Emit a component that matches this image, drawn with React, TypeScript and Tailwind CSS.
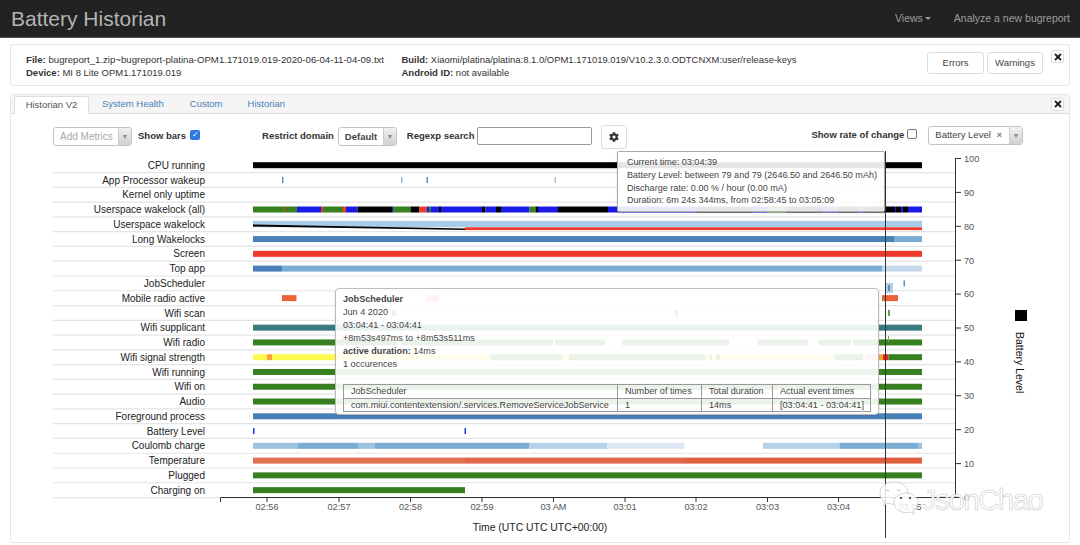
import { X } from 'lucide-react';
import { FaCog } from 'react-icons/fa';

const GREEN = '#37801f';
const BLUE = '#4a80b8';
const MID = '#79add4';
const PALE = '#a9cde8';
const RED = '#f0392b';
const ORANGE = '#ec6036';
const W = '#1a1ae6';
const K = '#000000';

type Seg = [number, number, string];

const blocks: Seg[] = [
  [253, 284, GREEN], [284, 285, RED], [285, 297, GREEN], [297, 321, W], [321, 323, RED], [323, 343, GREEN], [343, 346, RED],
  [346, 357.5, W], [357.5, 392, K], [392, 393, W], [393, 410.5, GREEN], [410.5, 419.5, K], [419.5, 426.5, RED], [426.5, 429, W],
  [429, 431, GREEN], [431, 439, W], [439, 441, K], [441, 482, W], [482, 485.5, K], [485.5, 496, W], [496, 501, K], [501, 529.5, W],
  [529.5, 535.5, GREEN], [535.5, 538, K], [538, 558, W], [558, 608, K], [608, 680, W], [680, 697, W], [697, 752, K], [752, 767, W],
  [767, 786, GREEN], [786, 822, K], [822, 838, W], [838, 858, K], [858, 865, W], [865, 895, K], [895, 896, W], [896, 901, K],
  [901, 903, W], [903, 908, K], [908, 914, W], [914, 922, W],
];

const radio: Seg[] = [
  [253, 397, GREEN], [401.5, 553, GREEN], [555, 605, GREEN], [622, 729, GREEN], [757.5, 808.5, GREEN], [818.5, 851, GREEN], [853, 922, GREEN],
];

const signal: Seg[] = [
  [253, 267, '#fdf94f'], [267, 272, '#f9a03a'], [272, 490, '#fdf94f'], [490, 562, GREEN], [562, 569, '#fdf94f'], [569, 705, GREEN],
  [705, 709.5, '#fdf94f'], [709.5, 712, GREEN], [712, 716, '#fdf94f'], [716, 720, GREEN], [720, 827.5, '#fdf94f'], [827.5, 834, '#fbe36a'],
  [834, 863, GREEN], [865, 879, '#f7a9a2'], [879, 883, '#f9a03a'], [883, 888.5, '#e8231c'], [888.5, 922, GREEN],
];

const coulomb: Seg[] = [
  [253, 298, '#9bc2de'], [298, 358, MID], [358, 375, '#9bc2de'], [375, 529.5, MID], [529.5, 607, '#b5d2ea'], [607, 684.5, '#dbe8f3'],
  [763, 839.5, '#b5d2ea'], [839.5, 918, MID], [918, 922, '#9bc2de'],
];

const rows: { label: string; segs: Seg[] }[] = [
  { label: 'CPU running', segs: [[253, 922, K]] },
  { label: 'App Processor wakeup', segs: [[282, 283.5, '#5b8fc6'], [401, 402.5, '#8fb8dc'], [426.5, 428, '#5b8fc6'], [554.5, 556, '#a9c4dc']] },
  { label: 'Kernel only uptime', segs: [] },
  { label: 'Userspace wakelock (all)', segs: blocks },
  { label: 'Userspace wakelock', segs: [] },
  { label: 'Long Wakelocks', segs: [[253, 894, BLUE], [894, 922, MID]] },
  { label: 'Screen', segs: [[253, 922, RED]] },
  { label: 'Top app', segs: [[253, 282, BLUE], [282, 882, MID], [882, 922, '#c6d9ec']] },
  { label: 'JobScheduler', segs: [[903.5, 905, '#5b8fc6']] },
  { label: 'Mobile radio active', segs: [[282, 296.5, ORANGE], [426.5, 439, '#ee7a5a'], [882, 898, ORANGE]] },
  { label: 'Wifi scan', segs: [[392, 395.5, GREEN], [675, 678, GREEN], [888, 890, '#5f9e50']] },
  { label: 'Wifi supplicant', segs: [[253, 922, '#3a7b80']] },
  { label: 'Wifi radio', segs: radio },
  { label: 'Wifi signal strength', segs: signal },
  { label: 'Wifi running', segs: [[253, 922, GREEN]] },
  { label: 'Wifi on', segs: [[253, 922, GREEN]] },
  { label: 'Audio', segs: [[253, 922, GREEN]] },
  { label: 'Foreground process', segs: [[253, 922, BLUE]] },
  { label: 'Battery Level', segs: [[253, 254.5, '#1a3ee6'], [464.5, 466, '#1a3ee6']] },
  { label: 'Coulomb charge', segs: coulomb },
  { label: 'Temperature', segs: [[253, 465, '#e2704e'], [465, 685, '#e2664a'], [685, 922, '#e05f3f']] },
  { label: 'Plugged', segs: [[253, 922, GREEN]] },
  { label: 'Charging on', segs: [[253, 465, GREEN]] },
];

const xTicks = [
  [267, '02:56'], [339, '02:57'], [410.5, '02:58'], [482, '02:59'], [553.5, '03 AM'], [625, '03:01'], [696, '03:02'], [767.5, '03:03'], [838.5, '03:04'], [910, '03:05'],
] as const;

const yTicks = [100, 90, 80, 70, 60, 50, 40, 30, 20, 10, 0];

const rowY = (i: number) => 165.2 + i * 14.77;

function Chart() {
  return (
    <svg viewBox="11 150 1058 392" className="block h-[392px] w-[1058px]" fontFamily="'Liberation Sans', sans-serif">
      {rows.map((row, i) => (
        <g key={row.label}>
          <text x={205} y={rowY(i) + 3.6} textAnchor="end" fontSize={10} fill="#222">{row.label}</text>
          <line x1={53} x2={955} y1={rowY(i) + 7.4} y2={rowY(i) + 7.4} stroke="#e4e4e4" strokeWidth={1.2} />
          {row.segs.map(([a, b, c]) => (
            <rect key={a} x={a} y={rowY(i) - 3} width={b - a} height={6} fill={c} />
          ))}
        </g>
      ))}

      {/* Userspace wakelock has a stacked bar with a wedge */}
      <rect x={253} y={220.8} width={669} height={6.5} fill={PALE} />
      <rect x={465} y={227.3} width={457} height={2.8} fill={RED} />
      <polygon points="253,224.4 253,226.6 465,230 465,228.4" fill="#000" />

      {/* JobScheduler highlight */}
      <rect x={886} y={283} width={7} height={10} fill="#b4cfe8" />
      <rect x={888} y={285} width={2} height={6} fill="#5b8fc6" />
      <rect x={888} y={336} width={1} height={6} fill="#9a9a3a" />

      <line x1={220.5} x2={955.5} y1={497.5} y2={497.5} stroke="#333" />
      <line x1={220.5} x2={220.5} y1={497.5} y2={502} stroke="#333" />
      {xTicks.map(([x, t]) => (
        <g key={t}>
          <line x1={x} x2={x} y1={497.5} y2={502} stroke="#333" />
          <text x={x} y={510} textAnchor="middle" fontSize={9.2} fill="#555">{t}</text>
        </g>
      ))}
      <text x={540} y={530.500} textAnchor="middle" fontSize={10.4} fill="#222">Time (UTC UTC UTC+00:00)</text>

      <line x1={955.5} x2={955.5} y1={158} y2={497.5} stroke="#333" />
      {yTicks.map((v, i) => (
        <g key={v}>
          <line x1={955.5} x2={961} y1={158.5 + i * 33.9} y2={158.5 + i * 33.9} stroke="#333" />
          <text x={964} y={161.8 + i * 33.9} fontSize={9.2} fill="#555">{v}</text>
        </g>
      ))}

      <rect x={1015} y={310} width={12} height={11} fill="#000" />
      <text transform="translate(1016 332) rotate(90)" fontSize={10.5} fill="#111">Battery Level</text>

      <line x1={885.5} x2={885.5} y1={151} y2={538} stroke="#333" />

      {/* watermark */}
      <g fill="#fff" fillOpacity={0.85} stroke="#c8c8c8" strokeWidth={0.8}>
        <path d="M894 482c-8.500 0-14 5-14 11.500 0 3.500 1.800 6.300 4.800 8.400l-1.200 3.600 4.300-2.200c2.100.6 4.100.9 6.100.9 6.500 0 13-4 14-10.700.3-6.700-5.500-11.500-14-11.500z" />
        <path d="M906 493c-6.800 0-12 4.300-12 9.800s5.200 9.800 12 9.800c1.600 0 3-.2 4.400-.7l3.800 2-1-3.300c2.800-1.900 4.800-4.600 4.800-7.800 0-5.500-5.200-9.800-12-9.800z" />
      </g>
      <path d="M886 491q1.500-2 3 0M897 491q1.500-2 3 0" fill="none" stroke="#aaa" strokeWidth={0.8} />
      <circle cx={901} cy={498} r={1.1} fill="#333" />
      <circle cx={910} cy={498} r={1.1} fill="#333" />
      <text x={922} y={510} fontSize={29} fill="#fff" fillOpacity={0.85} stroke="#cacaca" strokeWidth={0.6} textLength={122} fontFamily="'Liberation Sans', sans-serif">JsonChao</text>
    </svg>
  );
}

function Caret() {
  return <span className="h-0 w-0 border-x-[2.500px] border-t-[4px] border-x-transparent border-t-[#888]" />;
}

function SelectBox({ text, width, bold, muted }: { text: string; width: string; bold?: boolean; muted?: boolean }) {
  return (
    <div className={`flex h-[19px] shrink-0 items-stretch overflow-hidden rounded-[3px] border border-[#c4c4c4] ${width}`}>
      <span className={`flex-1 pl-[6px] leading-[18px] ${bold ? 'font-bold text-[#333]' : ''} ${muted ? 'text-[10px] text-[#aaa]' : 'text-[#444]'}`}>{text}</span>
      <span className="flex w-[13px] items-center justify-center border-l border-[#ccc] bg-linear-to-b from-[#f2f2f2] to-[#cfcfcf]">
        <Caret />
      </span>
    </div>
  );
}

function CloseBtn() {
  return (
    <span className="flex h-[13px] w-[13px] items-center justify-center rounded-[2px] border border-[#ddd] bg-white">
      <X size={10} strokeWidth={4.5} color="#222" />
    </span>
  );
}

export default function App() {
  return (
    <div className="h-[545px] w-[1080px] overflow-hidden bg-white font-['Liberation_Sans',sans-serif] text-[9.500px] text-[#333]">
      <nav className="flex h-[38px] items-center justify-between border-b border-[#555] bg-[#222] pl-[11px] pr-[10px]">
        <span className="text-[21px] text-[#b4b4b4]">Battery Historian</span>
        <div className="flex items-center gap-[23px] text-[10.500px] text-[#9d9d9d]">
          <span className="flex items-center gap-[2px]">
            Views
            <span className="h-0 w-0 border-x-[3px] border-t-[3px] border-x-transparent border-t-[#9d9d9d]" />
          </span>
          <span>Analyze a new bugreport</span>
        </div>
      </nav>

      <section className="mx-[10px] mt-[6px] flex h-[42px] rounded-[3px] border border-[#e6e6e6] pl-[15px] pr-[5px]">
        <div className="w-[375.500px] pt-[8px] leading-[13px]">
          <div className="text-[9.650px]"><b>File:</b> bugreport_1.zip~bugreport-platina-OPM1.171019.019-2020-06-04-11-04-09.txt</div>
          <div><b>Device:</b> MI 8 Lite OPM1.171019.019</div>
        </div>
        <div className="flex-1 pt-[8px] leading-[13px]">
          <div className="text-[9.450px]"><b>Build:</b> Xiaomi/platina/platina:8.1.0/OPM1.171019.019/V10.2.3.0.ODTCNXM:user/release-keys</div>
          <div><b>Android ID:</b> not available</div>
        </div>
        <div className="mt-[7px] flex h-[22px] gap-[3px]">
          <button className="w-[57px] rounded-[3px] border border-[#ddd] text-[#444]">Errors</button>
          <button className="w-[56px] rounded-[3px] border border-[#ddd] text-[#444]">Warnings</button>
        </div>
        <div className="ml-[8px] mt-[5px]"><CloseBtn /></div>
      </section>

      <section className="mx-[10px] mt-[8px] h-[449px] rounded-[3px] border border-[#e6e6e6]">
        <div className="flex h-[19px] items-end border-b border-[#ddd] bg-[#f5f5f5] pl-[3px] pr-[5px]">
          <span className="-mb-px flex h-[18px] w-[75px] items-center justify-center rounded-t-[3px] border border-b-0 border-[#ddd] bg-white text-[#555]">Historian V2</span>
          <span className="ml-[13px] flex h-[18px] items-center text-[#4a7fb5]">System Health</span>
          <span className="ml-[26px] flex h-[18px] items-center text-[#4a7fb5]">Custom</span>
          <span className="ml-[25px] flex h-[18px] items-center text-[#4a7fb5]">Historian</span>
          <span className="ml-auto self-center"><CloseBtn /></span>
        </div>

        <div className="flex h-[36px] items-center pt-[9px] pl-[42px]">
          <SelectBox text="Add Metrics" width="w-[79px]" muted />
          <b className="ml-[6px]">Show bars</b>
          <span className="-mt-[3px] ml-[4px] flex h-[10px] w-[10px] items-center justify-center rounded-[2px] bg-[#2f78e8] text-[8px] leading-none text-white">✓</span>
          <b className="ml-[62px]">Restrict domain</b>
          <span className="ml-[4px]"><SelectBox text="Default" width="w-[59px]" bold /></span>
          <b className="ml-[10px]">Regexp search</b>
          <span className="-mt-[1px] ml-[3px] h-[18px] w-[115px] rounded-[2px] border border-[#999] bg-white" />
          <span className="ml-[9px] flex h-[24px] w-[26px] items-center justify-center rounded-[3px] border border-[#ddd]">
            <FaCog size={10} color="#333" />
          </span>
          <b className="-mt-[2px] ml-[184px]">Show rate of change</b>
          <span className="-mt-[6px] ml-[3px] h-[10px] w-[10px] rounded-[2px] border border-[#777] bg-white" />
          <span className="-mt-[2px] ml-[11px] flex h-[19px] w-[95px] items-stretch overflow-hidden rounded-[3px] border border-[#c4c4c4] text-[#444]">
            <span className="flex flex-1 items-center gap-[6px] pl-[6px]">Battery Level <span className="text-[9px] font-bold text-[#777]">×</span></span>
            <span className="flex w-[13px] items-center justify-center border-l border-[#ccc] bg-linear-to-b from-[#f2f2f2] to-[#cfcfcf]"><Caret /></span>
          </span>
        </div>

        <div className="relative">
          <Chart />

          <div className="absolute left-[606px] top-[1px] h-[61px] w-[268px] rounded-[2px] border border-[#aaa] bg-white/90 pl-[9px] pt-[4px] text-[9.050px] leading-[12.800px] text-[#444] shadow-sm">
            <div>Current time: 03:04:39</div>
            <div>Battery Level: between 79 and 79 (2646.50 and 2646.50 mAh)</div>
            <div>Discharge rate: 0.00 % / hour (0.00 mA)</div>
            <div>Duration: 6m 24s 344ms, from 02:58:45 to 03:05:09</div>
          </div>

          <div className="absolute left-[324px] top-[138px] h-[127px] w-[544px] rounded-[4px] border border-[#bbb] bg-white/90 pl-[7px] pt-[4px] text-[9.100px] leading-[13px] text-[#444] shadow-sm">
            <div className="font-bold">JobScheduler</div>
            <div>Jun 4 2020</div>
            <div>03:04:41 - 03:04:41</div>
            <div>+8m53s497ms to +8m53s511ms</div>
            <div><b>active duration:</b> 14ms</div>
            <div>1 occurences</div>
            <table className="mt-[13px] w-[528px] table-fixed border-collapse border border-[#999]">
              <tbody>
                <tr className="h-[13.500px] leading-[12px]">
                  <td className="w-[274px] border border-[#999] pl-[7px]">JobScheduler</td>
                  <td className="w-[84px] border border-[#999] pl-[7px]">Number of times</td>
                  <td className="w-[71px] border border-[#999] pl-[7px]">Total duration</td>
                  <td className="border border-[#999] pl-[7px]">Actual event times</td>
                </tr>
                <tr className="h-[13.500px] leading-[12px]">
                  <td className="border border-[#999] pl-[7px]">com.miui.contentextension/.services.RemoveServiceJobService</td>
                  <td className="border border-[#999] pl-[7px]">1</td>
                  <td className="border border-[#999] pl-[7px]">14ms</td>
                  <td className="border border-[#999] pl-[7px]">[03:04:41 - 03:04:41]</td>
                </tr>
              </tbody>
            </table>
          </div>
        </div>
      </section>
    </div>
  );
}
